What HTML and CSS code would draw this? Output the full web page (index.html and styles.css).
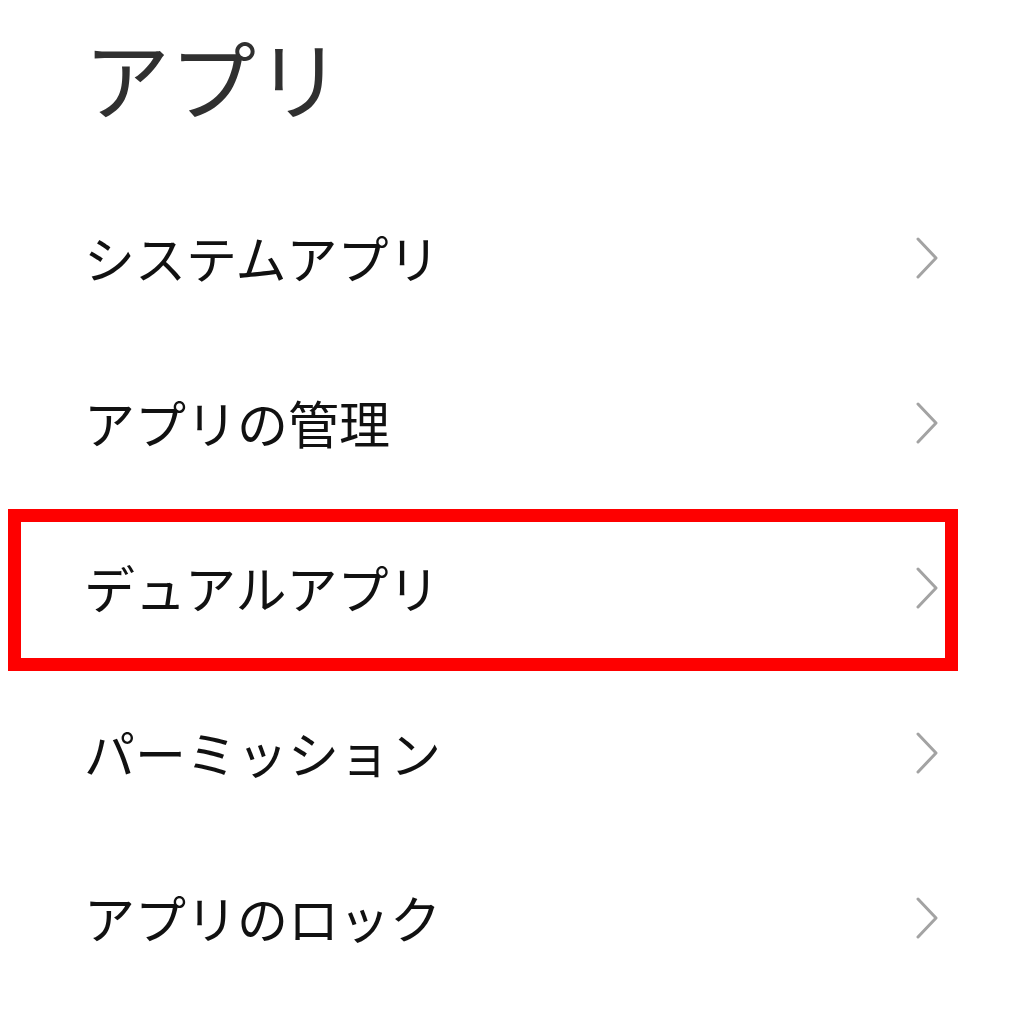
FILE: index.html
```html
<!DOCTYPE html>
<html lang="ja">
<head>
<meta charset="utf-8">
<title>アプリ</title>
<link rel="stylesheet" href="styles.css">
</head>
<body>
<div class="page">
  <h1 class="title">アプリ</h1>
  <ul class="list">
    <li class="row"><span class="label">システムアプリ</span><svg class="chev" viewBox="0 0 24 42" width="24" height="42"><polyline points="3,2 21,21 3,40"/></svg></li>
    <li class="row"><span class="label">アプリの管理</span><svg class="chev" viewBox="0 0 24 42" width="24" height="42"><polyline points="3,2 21,21 3,40"/></svg></li>
    <li class="row highlighted"><span class="label">デュアルアプリ</span><svg class="chev" viewBox="0 0 24 42" width="24" height="42"><polyline points="3,2 21,21 3,40"/></svg><span class="mark"></span></li>
    <li class="row"><span class="label">パーミッション</span><svg class="chev" viewBox="0 0 24 42" width="24" height="42"><polyline points="3,2 21,21 3,40"/></svg></li>
    <li class="row"><span class="label">アプリのロック</span><svg class="chev" viewBox="0 0 24 42" width="24" height="42"><polyline points="3,2 21,21 3,40"/></svg></li>
  </ul>
</div>
</body>
</html>
```
FILE: styles.css
```css
* { box-sizing: border-box; }
html, body {
  margin: 0;
  padding: 0;
  background: #ffffff;
}
body {
  font-family: "Noto Sans CJK JP", "Noto Sans", sans-serif;
  width: 1017px;
  height: 1024px;
  overflow: hidden;
}
.page {
  display: flex;
  flex-direction: column;
}
.title {
  margin: 0;
  height: 178px;
  padding: 27px 0 0 84px;
  font-size: 86px;
  font-weight: 400;
  line-height: 100px;
  color: #303030;
}
.list {
  list-style: none;
  margin: 0;
  padding: 0;
}
.row {
  position: relative;
  height: 165px;
  display: flex;
  align-items: center;
  justify-content: space-between;
  padding: 0 78px 0 84px;
}
.label {
  font-size: 51px;
  line-height: 60px;
  margin-bottom: 8px;
  color: #111111;
}
.chev {
  display: block;
  margin-bottom: 6px;
}
.chev polyline {
  fill: none;
  stroke: #a3a3a3;
  stroke-width: 3;
  stroke-linecap: round;
  stroke-linejoin: round;
}
.mark {
  position: absolute;
  left: 8px;
  top: 1px;
  width: 950px;
  height: 162px;
  border: 13px solid #fe0000;
  pointer-events: none;
}
```
